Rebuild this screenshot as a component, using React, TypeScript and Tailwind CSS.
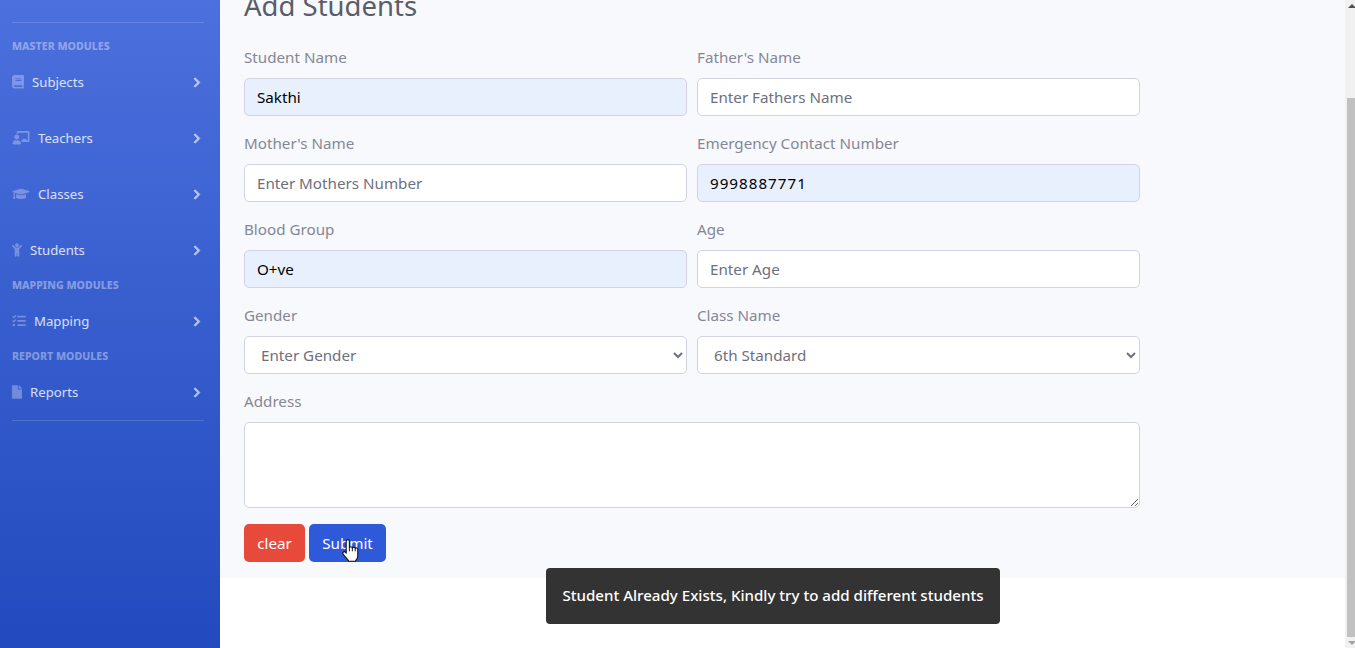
import { ReactNode } from 'react';
import { FaBook, FaChalkboardTeacher, FaChevronRight, FaChild, FaFile, FaGraduationCap, FaTasks } from 'react-icons/fa';

function NavSection({ children }: { children: string }) {
  return (
    <div className="h-[15px] px-3 flex items-center text-[10.6px] leading-none font-extrabold uppercase text-white/40">
      {children}
    </div>
  );
}

function NavItem({ icon, label }: { icon: ReactNode; label: string }) {
  return (
    <div className="h-14 pl-3 pr-5 flex items-center gap-2 text-[13.2px] text-white/80">
      <span className="text-white/30">{icon}</span>
      <span className="flex-1 pt-px">{label}</span>
      <FaChevronRight className="h-[11px] w-[8px] -mr-px text-white/60 stroke-[30px]" />
    </div>
  );
}

function Sidebar() {
  return (
    <aside className="w-[220px] shrink-0 h-full pt-[22px] bg-gradient-to-b from-[#4c70dd] to-[#224abe]">
      <div className="ml-3 mr-4 h-px bg-white/15 mb-4" />
      <NavSection>Master Modules</NavSection>
      <NavItem icon={<FaBook className="h-[13.6px] w-3" />} label="Subjects" />
      <NavItem icon={<FaChalkboardTeacher className="h-[13.6px] w-[18px]" />} label="Teachers" />
      <NavItem icon={<FaGraduationCap className="h-[13.6px] w-[18px]" />} label="Classes" />
      <NavItem icon={<FaChild className="h-[14px] w-[10px]" />} label="Students" />
      <NavSection>Mapping Modules</NavSection>
      <NavItem icon={<FaTasks className="h-[13.6px] w-[14px]" />} label="Mapping" />
      <NavSection>Report Modules</NavSection>
      <NavItem icon={<FaFile className="h-[14px] w-[10px]" />} label="Reports" />
      <div className="ml-3 mr-4 h-px bg-white/15" />
    </aside>
  );
}

function Field({ label, children }: { label: string; children: ReactNode }) {
  return (
    <div className="flex flex-col">
      <label className="h-6 leading-[22px] mb-2 text-[15.2px] text-[#858796]">{label}</label>
      {children}
    </div>
  );
}

const inputBase =
  'w-full h-[38px] px-3 pb-px rounded-[5px] border border-[#d1d3e2] text-[15.2px] outline-none placeholder:text-[#6e707e]';

function TextField({ label, placeholder, value, wide }: { label: string; placeholder?: string; value?: string; wide?: boolean }) {
  return (
    <Field label={label}>
      <input
        readOnly
        value={value ?? ''}
        placeholder={placeholder}
        className={`${inputBase} ${value ? 'bg-[#e8f0fe] text-black' : 'bg-white text-[#6e707e]'} ${wide ? 'tracking-[1px]' : ''}`}
      />
    </Field>
  );
}

function SelectField({ label, value }: { label: string; value: string }) {
  return (
    <Field label={label}>
      <select defaultValue={value} className={`${inputBase} bg-white text-[#6e707e]`}>
        <option>{value}</option>
      </select>
    </Field>
  );
}

function HandCursor() {
  return (
    <svg width="18" height="24" viewBox="1.400 0.500 14 19.500" className="absolute left-[342px] top-[539px]">
      <path
        d="M4.500 2.200c0-1.600 2.600-1.600 2.600 0v5.600c.2-1.300 2.300-1.300 2.400.1.300-1.100 2.200-1 2.300.3.500-.8 2.100-.5 2.100.9v5.500c0 1.600-1 2.600-2 4H6.600c-.8-1.400-2.800-3.200-4.600-5.900-.8-1.300.8-2.500 1.800-1.500l.7.8z"
        fill="#fff"
        stroke="#111"
        strokeWidth=".9"
        strokeLinejoin="round"
      />
      <path d="M7.100 8v2.500M9.500 8v2.500M11.800 8.500v2" stroke="#111" strokeWidth=".8" fill="none" />
    </svg>
  );
}

function Scrollbar() {
  return (
    <div className="w-[10px] shrink-0 h-full bg-[#f1f1f1] flex flex-col items-end">
      <div className="h-[98px] w-full flex justify-end pt-1">
        <div className="w-0 h-0 border-x-[4px] border-x-transparent border-b-[4px] border-b-[#505050] -mr-[1px]" />
      </div>
      <div className="w-2 h-[539px] bg-[#c1c1c1]" />
      <div className="flex-1 w-full flex justify-end pt-1">
        <div className="w-0 h-0 border-x-[4px] border-x-transparent border-t-[4px] border-t-[#a3a3a3] -mr-[1px]" />
      </div>
    </div>
  );
}

export default function App() {
  return (
    <div className='relative h-[648px] w-full flex overflow-hidden bg-white font-["Noto_Sans",sans-serif]'>
      <Sidebar />
      <main className="flex-1 min-w-0 h-full">
        <div className="h-[578px] overflow-hidden bg-[#f8f9fc] px-6">
          <div className="w-[896px]">
            <h3 className="-mt-[11px] h-[34px] leading-[34px] text-[27.500px] text-[#5a5c69] mb-[23px]">Add Students</h3>
            <div className="grid grid-cols-2 gap-x-[10px] gap-y-4">
              <TextField label="Student Name" value="Sakthi" />
              <TextField label="Father's Name" placeholder="Enter Fathers Name" />
              <TextField label="Mother's Name" placeholder="Enter Mothers Number" />
              <TextField label="Emergency Contact Number" value="9998887771" wide />
              <TextField label="Blood Group" value="O+ve" />
              <TextField label="Age" placeholder="Enter Age" />
              <SelectField label="Gender" value="Enter Gender" />
              <SelectField label="Class Name" value="6th Standard" />
            </div>
            <div className="mt-4">
              <Field label="Address">
                <textarea readOnly className="w-full h-[86px] block px-3 py-2 rounded-[5px] border border-[#d1d3e2] bg-white outline-none" />
              </Field>
            </div>
            <div className="mt-4 flex gap-1">
              <button className="h-[38px] w-[61px] rounded-[5px] bg-[#e74a3b] text-[15.200px] text-white">clear</button>
              <button className="h-[38px] w-[77px] rounded-[5px] bg-[#2e59d9] text-[15.200px] text-white">Submit</button>
            </div>
          </div>
        </div>
      </main>
      <Scrollbar />
      <HandCursor />
      <div className="absolute left-[546px] top-[568px] w-[454px] h-14 pb-px rounded-sm bg-[#333] text-white text-[15.100px] font-medium flex items-center justify-center">
        Student Already Exists, Kindly try to add different students
      </div>
    </div>
  );
}
